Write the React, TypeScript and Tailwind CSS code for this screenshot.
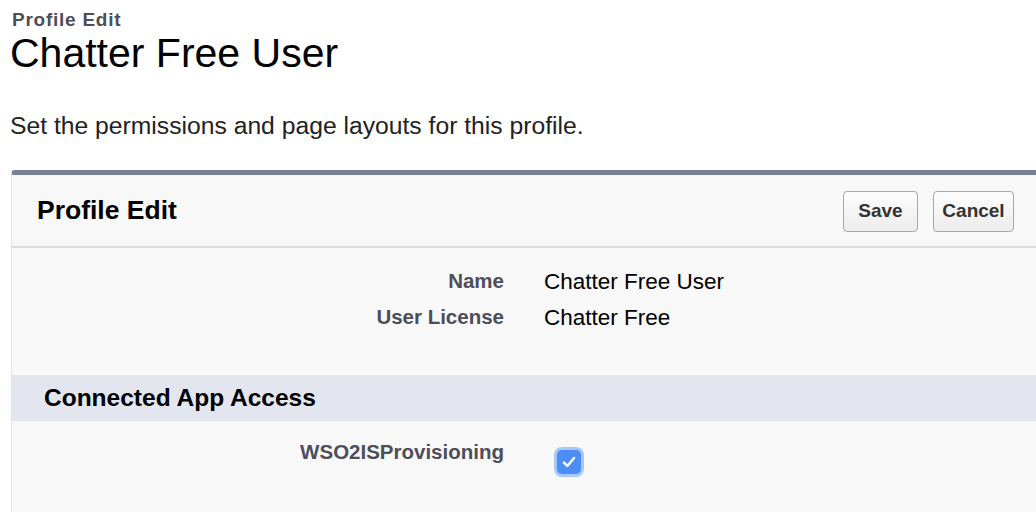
import React from 'react';

const fieldRows = [
  { label: 'Name', value: 'Chatter Free User' },
  { label: 'User License', value: 'Chatter Free' },
];

const App: React.FC = () => {
  return (
    <div className="w-[1036px] h-[512px] overflow-hidden bg-white font-['Liberation_Sans',Arial,sans-serif]">
      <div className="pl-[12px] pt-[9px]">
        <div className="text-[19px] leading-[22px] font-bold tracking-[0.75px] text-[#4e4e5a]">Profile Edit</div>
        <h1 className="-ml-[2px] mt-[0px] text-[41px] leading-[44px] text-black">Chatter Free User</h1>
        <p className="-ml-[2px] mt-[38px] text-[24.7px] leading-[26px] text-[#222]">
          Set the permissions and page layouts for this profile.
        </p>
      </div>

      <div className="ml-[11px] mt-[31px] border-t-[5px] border-l border-t-[#7a8195] border-l-[#e4e4e4] rounded-tl-[4px] bg-[#f8f8f8] h-[400px]">
        {/* header */}
        <div className="flex items-center justify-between h-[73px] pl-[25px] pr-[22px] border-b-2 border-[#dcdcdc]">
          <h2 className="text-[26.5px] font-bold text-black">Profile Edit</h2>
          <div className="flex gap-[15px] mt-[1px]">
            <button className="h-[41px] w-[75px] rounded-[4px] border border-[#a8a8a8] bg-gradient-to-b from-[#fdfdfd] to-[#ececec] text-[19px] font-bold text-[#333]">
              Save
            </button>
            <button className="h-[41px] w-[81px] rounded-[4px] border border-[#a8a8a8] bg-gradient-to-b from-[#fdfdfd] to-[#ececec] text-[19px] font-bold text-[#333]">
              Cancel
            </button>
          </div>
        </div>

        {/* fields */}
        <div className="pt-[22px] h-[127px]">
          {fieldRows.map((r) => (
            <div key={r.label} className="flex h-[36px] items-start">
              <div className="w-[492px] text-right text-[20.5px] leading-[22px] font-bold text-[#4e4e5a]">{r.label}</div>
              <div className="ml-[40px] text-[22.5px] leading-[24px] text-black">{r.value}</div>
            </div>
          ))}
        </div>

        {/* section */}
        <div className="h-[46px] bg-[#e3e6ee] pl-[32px] flex items-center">
          <h3 className="text-[24.5px] font-bold text-black">Connected App Access</h3>
        </div>

        <div className="flex pt-[20px]">
          <div className="w-[492px] text-right text-[20.5px] leading-[22px] font-bold text-[#4e4e5a]">WSO2ISProvisioning</div>
          <div className="ml-[50px] mt-[6px] w-[30px] h-[30px] rounded-[8px] bg-[#a6c8f7] p-[3px]">
            <div className="w-full h-full rounded-[5px] bg-[#4c8ef5] flex items-center justify-center">
              <svg width="18" height="18" viewBox="0 0 16 16" fill="none">
                <path d="M3.5 8.5 L6.5 11.5 L12.5 4.5" stroke="white" strokeWidth="2.2" strokeLinecap="round" strokeLinejoin="round" />
              </svg>
            </div>
          </div>
        </div>
      </div>
    </div>
  );
};

export default App;
